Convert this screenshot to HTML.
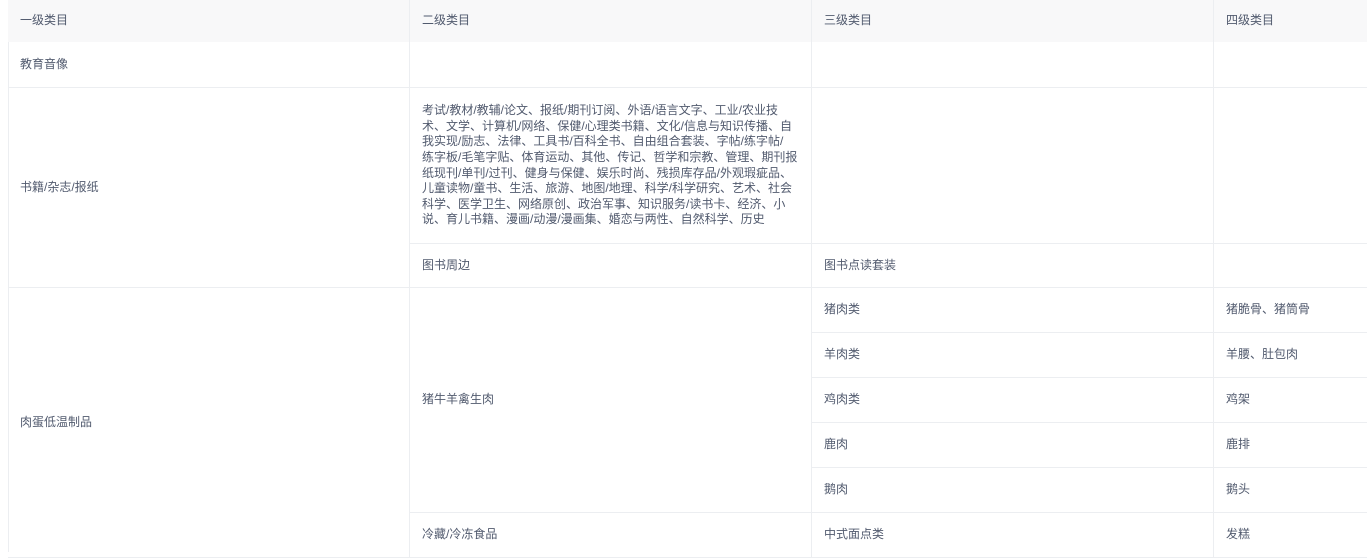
<!DOCTYPE html>
<html><head><meta charset="utf-8"><style>
*{margin:0;padding:0;box-sizing:border-box}
body{width:1367px;height:552px;overflow:hidden;background:#fff;font-family:"Liberation Sans","Noto Sans CJK SC",sans-serif;font-size:12px;color:#515a6e;position:relative}
.c{position:absolute;border-right:1px solid #eceef1;border-bottom:1px solid #eceef1;padding:0 12px;display:flex;align-items:center;line-height:15.6px}
.h{background:#f8f8f9}
#lb{position:absolute;left:8px;top:0;width:1px;height:552px;background:#eceef1}
</style></head><body>
<div id="lb"></div>
<div class="c h" style="left:8px;top:0;width:402px;height:42px;border-bottom:none">一级类目</div>
<div class="c h" style="left:410px;top:0;width:402px;height:42px;border-bottom:none">二级类目</div>
<div class="c h" style="left:812px;top:0;width:402px;height:42px;border-bottom:none">三级类目</div>
<div class="c h" style="left:1214px;top:0;width:160px;height:42px;border-bottom:none">四级类目</div>

<div class="c" style="left:8px;top:42px;width:402px;height:46px">教育音像</div>
<div class="c" style="left:410px;top:42px;width:402px;height:46px"></div>
<div class="c" style="left:812px;top:42px;width:402px;height:46px"></div>
<div class="c" style="left:1214px;top:42px;width:160px;height:46px"></div>

<div class="c" style="left:8px;top:88px;width:402px;height:200px">书籍/杂志/报纸</div>
<div class="c" style="left:410px;top:88px;width:402px;height:156px"><div>考试/教材/教辅/论文、报纸/期刊订阅、外语/语言文字、工业/农业技<br>术、文学、计算机/网络、保健/心理类书籍、文化/信息与知识传播、自<br>我实现/励志、法律、工具书/百科全书、自由组合套装、字帖/练字帖/<br>练字板/毛笔字贴、体育运动、其他、传记、哲学和宗教、管理、期刊报<br>纸现刊/单刊/过刊、健身与保健、娱乐时尚、残损库存品/外观瑕疵品、<br>儿童读物/童书、生活、旅游、地图/地理、科学/科学研究、艺术、社会<br>科学、医学卫生、网络原创、政治军事、知识服务/读书卡、经济、小<br>说、育儿书籍、漫画/动漫/漫画集、婚恋与两性、自然科学、历史</div></div>
<div class="c" style="left:812px;top:88px;width:402px;height:156px"></div>
<div class="c" style="left:1214px;top:88px;width:160px;height:156px"></div>
<div class="c" style="left:410px;top:244px;width:402px;height:44px">图书周边</div>
<div class="c" style="left:812px;top:244px;width:402px;height:44px">图书点读套装</div>
<div class="c" style="left:1214px;top:244px;width:160px;height:44px"></div>

<div class="c" style="left:8px;top:288px;width:402px;height:270px">肉蛋低温制品</div>
<div class="c" style="left:410px;top:288px;width:402px;height:225px">猪牛羊禽生肉</div>
<div class="c" style="left:812px;top:288px;width:402px;height:45px">猪肉类</div>
<div class="c" style="left:1214px;top:288px;width:160px;height:45px">猪脆骨、猪筒骨</div>
<div class="c" style="left:812px;top:333px;width:402px;height:45px">羊肉类</div>
<div class="c" style="left:1214px;top:333px;width:160px;height:45px">羊腰、肚包肉</div>
<div class="c" style="left:812px;top:378px;width:402px;height:45px">鸡肉类</div>
<div class="c" style="left:1214px;top:378px;width:160px;height:45px">鸡架</div>
<div class="c" style="left:812px;top:423px;width:402px;height:45px">鹿肉</div>
<div class="c" style="left:1214px;top:423px;width:160px;height:45px">鹿排</div>
<div class="c" style="left:812px;top:468px;width:402px;height:45px">鹅肉</div>
<div class="c" style="left:1214px;top:468px;width:160px;height:45px">鹅头</div>
<div class="c" style="left:410px;top:513px;width:402px;height:45px">冷藏/冷冻食品</div>
<div class="c" style="left:812px;top:513px;width:402px;height:45px">中式面点类</div>
<div class="c" style="left:1214px;top:513px;width:160px;height:45px">发糕</div>
</body></html>
